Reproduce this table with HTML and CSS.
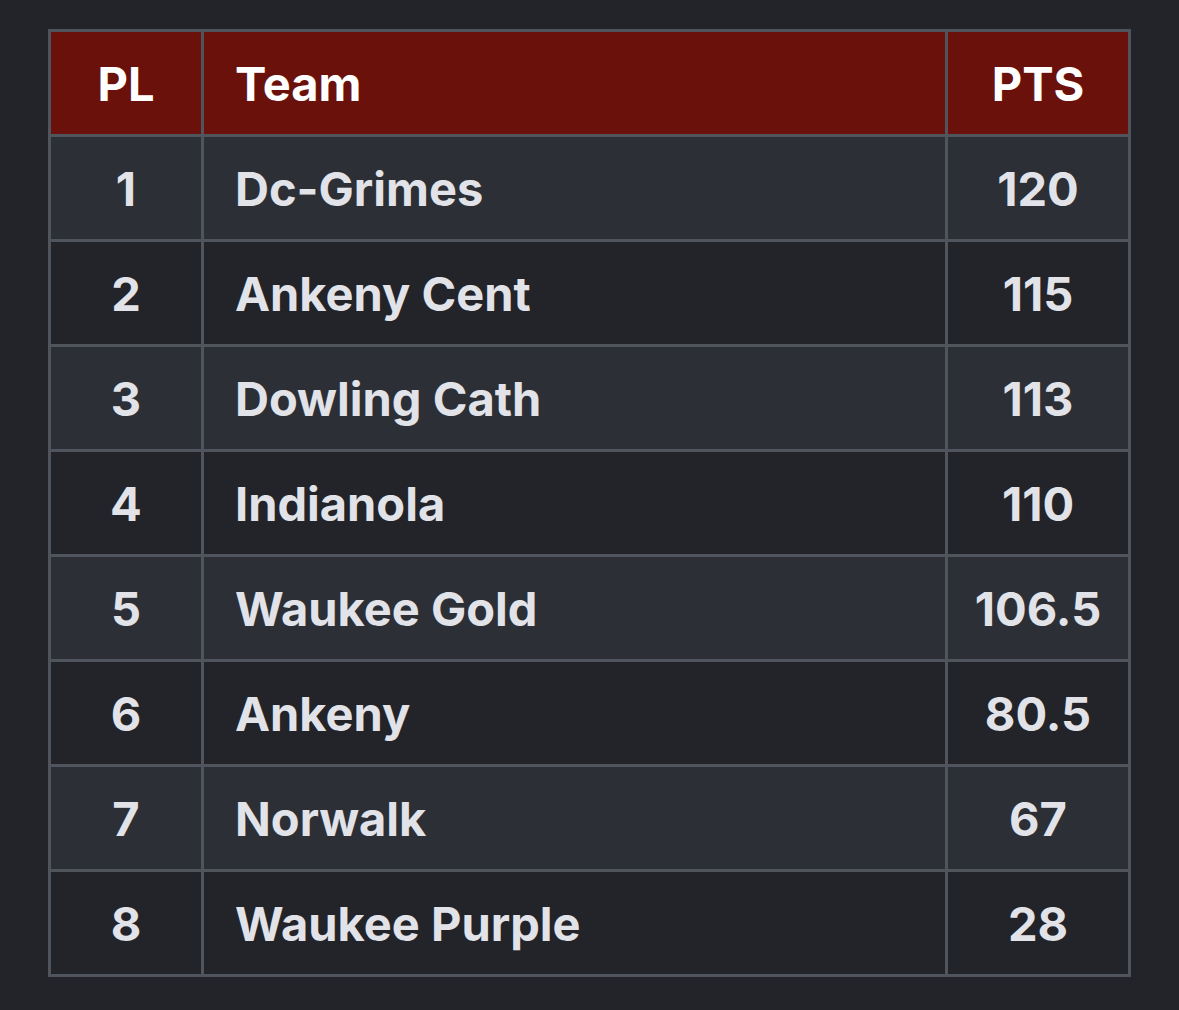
FILE: index.html
```html
<!DOCTYPE html>
<html lang="en">
<head>
<meta charset="utf-8">
<title>Standings</title>
<link rel="stylesheet" href="styles.css">
</head>
<body>
<table class="standings">
  <colgroup>
    <col class="col-pl">
    <col class="col-team">
    <col class="col-pts">
  </colgroup>
  <thead>
    <tr class="head">
      <th class="c">PL</th>
      <th class="l">Team</th>
      <th class="c">PTS</th>
    </tr>
  </thead>
  <tbody>
    <tr class="odd"><td class="c">1</td><td class="l">Dc-Grimes</td><td class="c">120</td></tr>
    <tr class="even"><td class="c">2</td><td class="l">Ankeny Cent</td><td class="c">115</td></tr>
    <tr class="odd"><td class="c">3</td><td class="l">Dowling Cath</td><td class="c">113</td></tr>
    <tr class="even"><td class="c">4</td><td class="l">Indianola</td><td class="c">110</td></tr>
    <tr class="odd"><td class="c">5</td><td class="l">Waukee Gold</td><td class="c">106.5</td></tr>
    <tr class="even"><td class="c">6</td><td class="l">Ankeny</td><td class="c">80.5</td></tr>
    <tr class="odd"><td class="c">7</td><td class="l">Norwalk</td><td class="c">67</td></tr>
    <tr class="even"><td class="c">8</td><td class="l">Waukee Purple</td><td class="c">28</td></tr>
  </tbody>
</table>
</body>
</html>
```

FILE: styles.css
```css
html, body {
  margin: 0;
  background: #222429;
}
body {
  padding: 29px 0 0 48px;
  font-family: Inter, "Noto Sans", "Liberation Sans", sans-serif;
}
.standings {
  border-collapse: separate;
  border-spacing: 3px;
  background: #50545c;
  table-layout: fixed;
  width: 1083px;
}
.col-pl { width: 150px; }
.col-team { width: 741px; }
.col-pts { width: 180px; }
.standings th,
.standings td {
  height: 102px;
  padding: 0;
  font-size: 47px;
  font-weight: 700;
  vertical-align: middle;
  line-height: 1;
  box-sizing: border-box;
}
.standings .c { text-align: center; }
.standings .l { text-align: left; padding-left: 31px; }
.head th {
  background: #6b110c;
  color: #ffffff;
}
.odd td {
  background: #2c2f35;
  color: #e1e3e8;
}
.even td {
  background: #222429;
  color: #e1e3e8;
}
```
